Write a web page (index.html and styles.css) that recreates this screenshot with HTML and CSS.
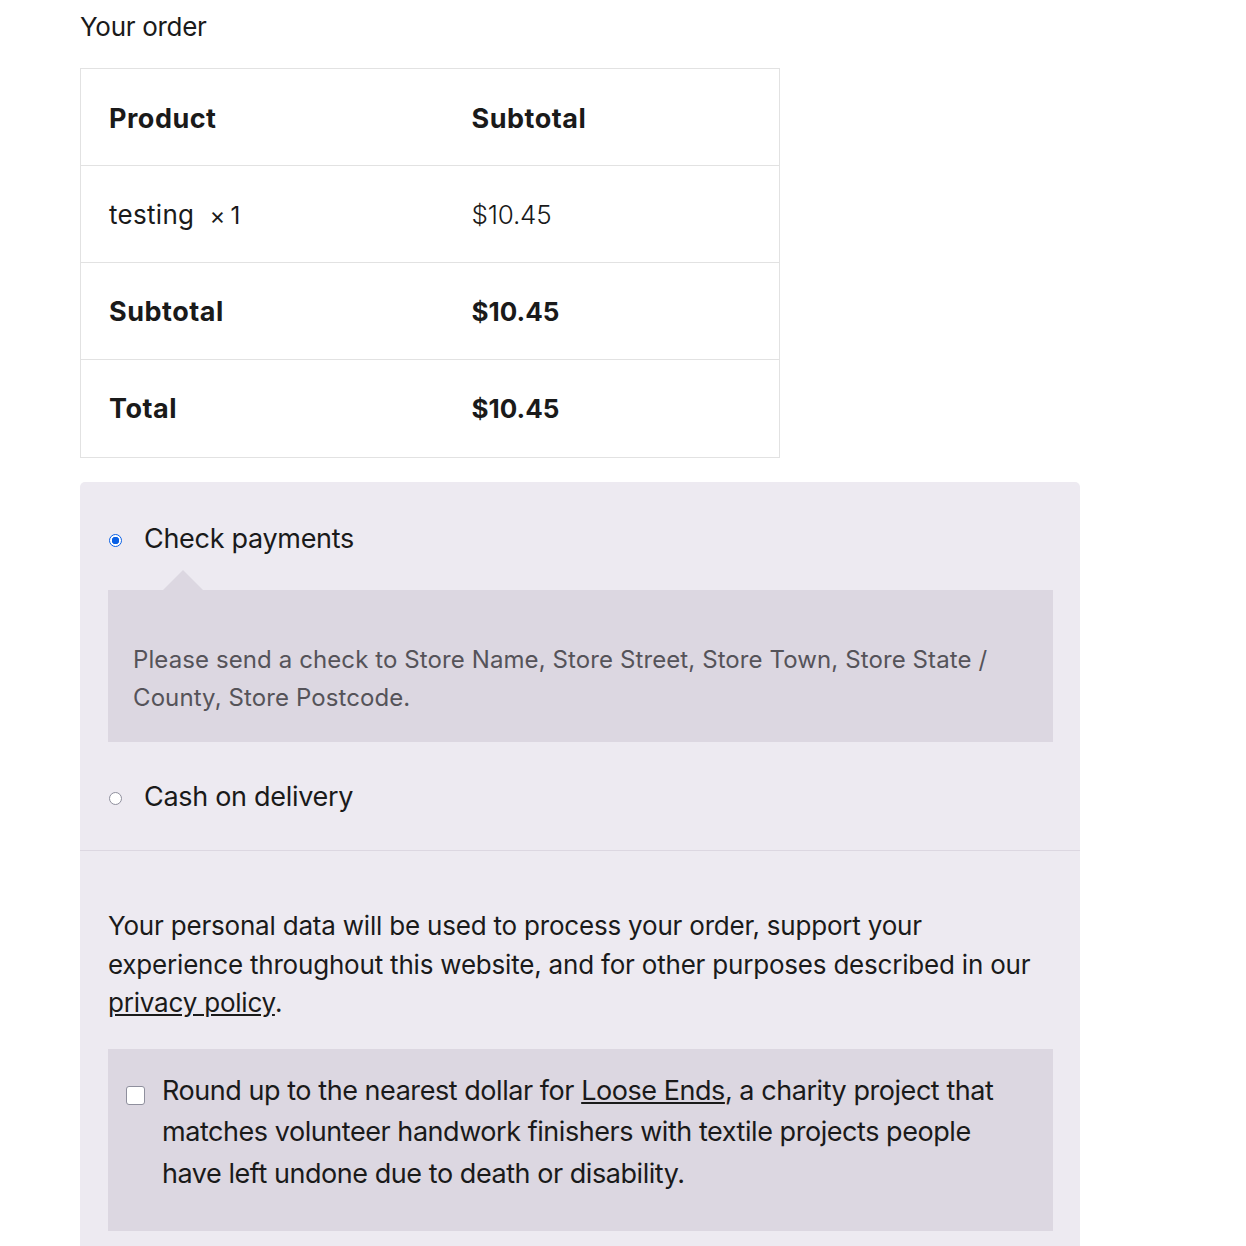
FILE: index.html
```html
<!DOCTYPE html>
<html lang="en">
<head>
<meta charset="utf-8">
<title>Your order</title>
<link rel="stylesheet" href="styles.css">
</head>
<body>
<div class="wrap">
  <h3 class="order-title">Your order</h3>
  <table class="order-table">
    <thead>
      <tr><th class="c1">Product</th><th class="c2">Subtotal</th></tr>
    </thead>
    <tbody>
      <tr><td class="c1">testing&nbsp; <span class="qty">×&thinsp;1</span></td><td class="c2 light">$10.45</td></tr>
    </tbody>
    <tfoot>
      <tr><th class="c1">Subtotal</th><td class="c2 strong">$10.45</td></tr>
      <tr class="total-row"><th class="c1">Total</th><td class="c2 strong">$10.45</td></tr>
    </tfoot>
  </table>

  <div class="payment">
    <ul class="methods">
      <li class="method">
        <label class="method-label"><span class="radio checked"></span>Check payments</label>
        <div class="payment-box">
          <p>Please send a check to Store Name, Store Street, Store Town, Store State / County, Store Postcode.</p>
        </div>
      </li>
      <li class="method">
        <label class="method-label"><span class="radio"></span>Cash on delivery</label>
      </li>
    </ul>
    <div class="place-order">
      <p class="privacy">Your personal data will be used to process your order, support your experience throughout this website, and for other purposes described in our <a href="#">privacy policy</a>.</p>
      <div class="charity">
        <span class="checkbox"></span>
        <p>Round up to the nearest dollar for <a href="#">Loose Ends</a>, a charity project that matches volunteer handwork finishers with textile projects people have left undone due to death or disability.</p>
      </div>
    </div>
  </div>
</div>
</body>
</html>
```

FILE: styles.css
```css
html, body {
  margin: 0;
  padding: 0;
  background: #fff;
}
body {
  font-family: Inter, "Noto Sans", sans-serif;
  color: #1a1a1a;
}
.wrap {
  padding-left: 80px;
  width: 1000px;
}
.order-title {
  margin: 0;
  padding-top: 10px;
  height: 68px;
  box-sizing: border-box;
  font-weight: 400;
  font-size: 26px;
  line-height: 34px;
  letter-spacing: -0.3px;
}
.order-table {
  width: 700px;
  border-collapse: collapse;
  border: 1px solid #e2e2e2;
  font-size: 26px;
}
.order-table th,
.order-table td {
  height: 97px;
  padding: 0 0 0 28px;
  text-align: left;
  border-top: 1px solid #e2e2e2;
  box-sizing: border-box;
}
.order-table thead th {
  padding-top: 2px;
}
.order-table .total-row th,
.order-table .total-row td {
  height: 98px;
}
.order-table .c1 { width: 363px; }
.order-table th {
  font-weight: 700;
  font-size: 27px;
  letter-spacing: 0.5px;
}
.order-table .light { font-weight: 300; letter-spacing: -0.2px; }
.order-table .strong { font-weight: 700; letter-spacing: 0; }
.order-table td.c1 { font-weight: 400; letter-spacing: 0.3px; }
.qty { font-size: 24px; }

.payment {
  margin-top: 24px;
  background: #edeaf1;
  border-radius: 5px 5px 0 0;
  width: 1000px;
  padding-bottom: 60px;
}
.methods {
  list-style: none;
  margin: 0;
  padding: 28px 27px 0 28px;
  border-bottom: 1px solid #dcd7e1;
}
.method {
  margin: 0;
}
.method-label {
  display: flex;
  align-items: center;
  height: 56px;
  font-size: 27px;
  letter-spacing: -0.3px;
}
.method:last-child .method-label {
  margin-top: 26px;
  margin-bottom: 26px;
}
.radio {
  width: 13px;
  height: 13px;
  border-radius: 50%;
  border: 1px solid #8f8f9d;
  background: #fff;
  box-sizing: border-box;
  margin-left: 1px;
  margin-right: 22px;
  margin-top: 5px;
}
.radio.checked {
  border: 1.5px solid #0b61e5;
  background: radial-gradient(circle, #0b61e5 0 3.5px, #fff 4px);
}
.payment-box {
  position: relative;
  margin-top: 24px;
  background: #dcd7e1;
  padding: 51px 25px 25px 25px;
}
.payment-box::before {
  content: "";
  position: absolute;
  left: 55px;
  top: -20px;
  border: 20px solid transparent;
  border-top: 0;
  border-bottom-color: #dcd7e1;
}
.payment-box p {
  margin: 0;
  font-size: 24px;
  line-height: 38px;
  color: #555359;
  letter-spacing: 0.1px;
}
.place-order {
  padding: 56px 27px 0 28px;
}
.privacy {
  margin: 0 0 26px 0;
  font-size: 26px;
  line-height: 38.5px;
  letter-spacing: -0.2px;
}
.privacy a, .charity a {
  color: inherit;
}
.charity {
  display: flex;
  align-items: flex-start;
  background: #dcd7e1;
  padding: 21px 50px 37px 18px;
}
.checkbox {
  flex: none;
  width: 19px;
  height: 19px;
  border: 1px solid #8f8f9d;
  border-radius: 3px;
  background: #fff;
  box-sizing: border-box;
  margin: 16px 17px 0 0;
}
.charity p {
  margin: 0;
  font-size: 27px;
  line-height: 41.5px;
  letter-spacing: -0.45px;
}
```
